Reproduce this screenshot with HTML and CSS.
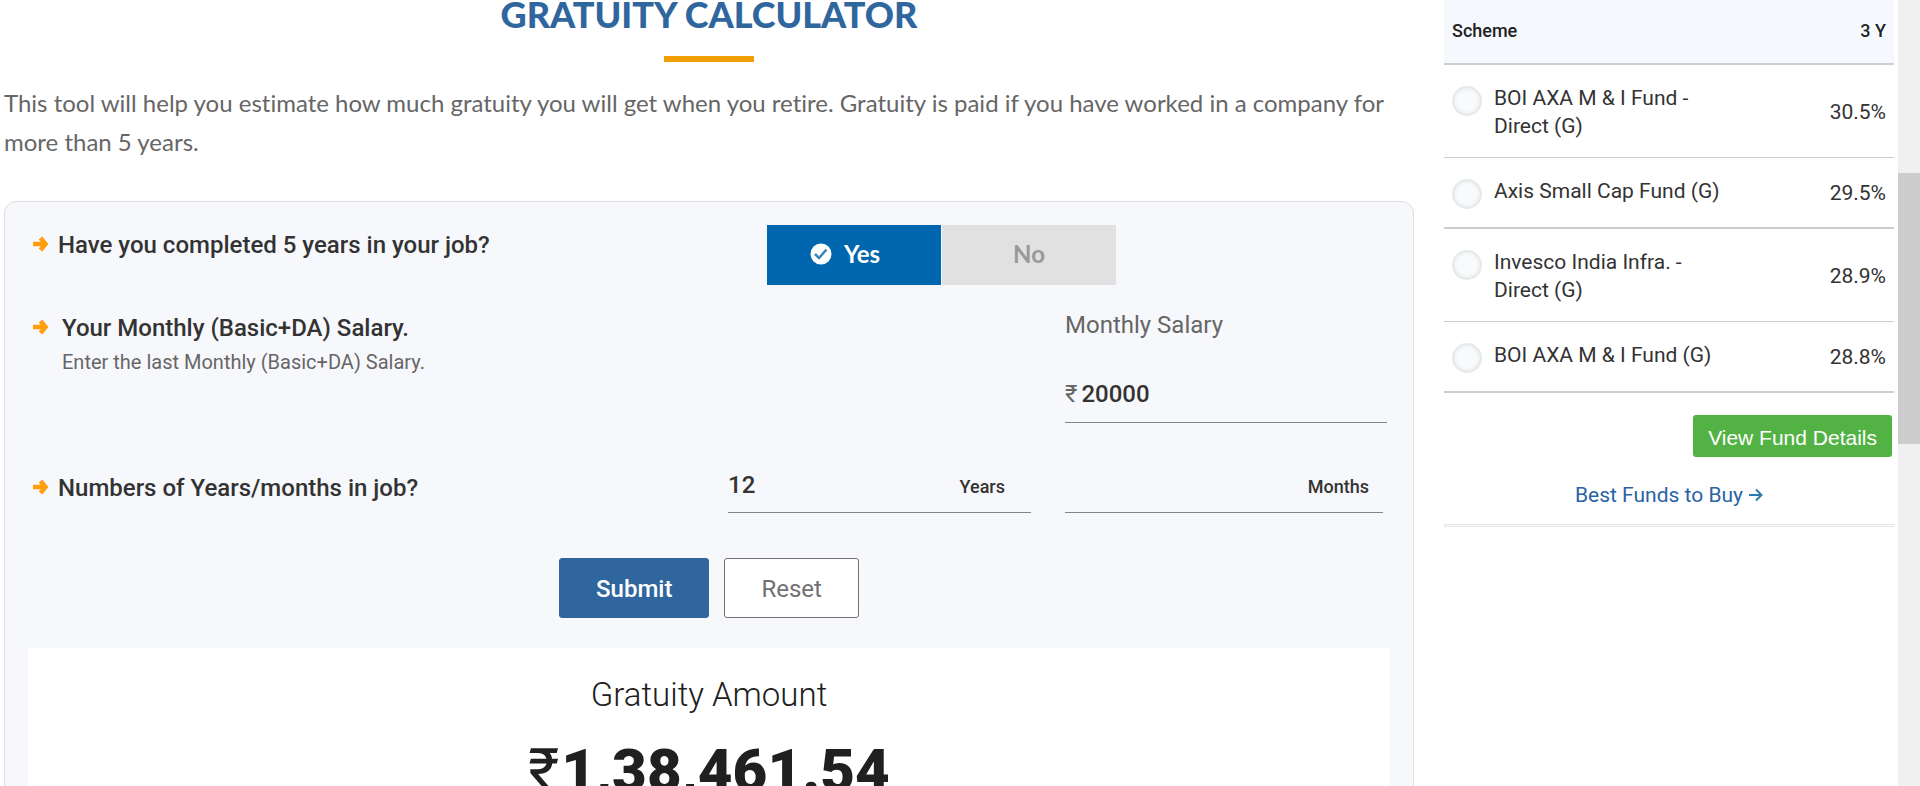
FILE: index.html
```html
<!DOCTYPE html>
<html lang="en">
<head>
<meta charset="utf-8">
<meta name="viewport" content="width=device-width, initial-scale=1">
<title>Gratuity Calculator</title>
<link rel="stylesheet" href="styles.css">
</head>
<body>
<svg class="defs" aria-hidden="true">
  <symbol id="arrow" viewBox="0 0 16 18">
    <path d="M0 9h12M7.500 3l5 6-5 6" fill="none" stroke="currentColor" stroke-width="4.500"/>
  </symbol>
</svg>
<div class="page">
  <main class="main">
    <h1 class="title">GRATUITY CALCULATOR</h1>
    <p class="intro">This tool will help you estimate how much gratuity you will get when you retire. Gratuity is paid if you have worked in a company for more than 5 years.</p>

    <form class="card">
      <div class="row">
        <div class="question first">
          <svg class="bullet"><use href="#arrow"/></svg>
          <span class="question-text">Have you completed 5 years in your job?</span>
        </div>
        <div class="choice">
          <button class="choice-btn selected" type="button" aria-pressed="true">
            <svg class="check" viewBox="0 0 22 22" aria-hidden="true">
              <circle cx="11" cy="11" r="10.5" fill="#fff"/>
              <path d="M5 11l4 4 7.500-8.500" fill="none" stroke="#3b83bd" stroke-width="2.500"/>
            </svg>
            Yes
          </button>
          <button class="choice-btn" type="button" aria-pressed="false">No</button>
        </div>
      </div>

      <div class="row">
        <div class="question spaced">
          <svg class="bullet"><use href="#arrow"/></svg>
          <div>
            <span class="question-text">Your Monthly (Basic+DA) Salary.</span>
            <p class="hint">Enter the last Monthly (Basic+DA) Salary.</p>
          </div>
        </div>
        <div class="salary">
          <label class="field-label" for="salary">Monthly Salary</label>
          <div class="field">
            <span class="currency">₹</span>
            <input class="field-input" id="salary" type="text" value="20000">
          </div>
        </div>
      </div>

      <div class="row tenure">
        <div class="question">
          <svg class="bullet"><use href="#arrow"/></svg>
          <span class="question-text">Numbers of Years/months in job?</span>
        </div>
        <div class="field years">
          <input class="field-input" id="years" type="text" value="12">
          <label class="unit" for="years">Years</label>
        </div>
        <div class="field months">
          <input class="field-input" id="months" type="text">
          <label class="unit" for="months">Months</label>
        </div>
      </div>

      <div class="actions">
        <button class="btn submit" type="submit">Submit</button>
        <button class="btn reset" type="reset">Reset</button>
      </div>

      <section class="result">
        <h2 class="result-title">Gratuity Amount</h2>
        <p class="amount"><span class="amount-symbol">₹</span>1,38,461.54</p>
      </section>
    </form>
  </main>

  <aside class="side">
    <table class="funds">
      <thead>
        <tr><th>Scheme</th><th class="rate">3 Y</th></tr>
      </thead>
      <tbody>
        <tr>
          <td><div class="fund"><input class="radio" type="radio" name="fund" id="f1"><label for="f1">BOI AXA M &amp; I Fund - Direct (G)</label></div></td>
          <td class="rate">30.5%</td>
        </tr>
        <tr>
          <td><div class="fund"><input class="radio" type="radio" name="fund" id="f2"><label for="f2">Axis Small Cap Fund (G)</label></div></td>
          <td class="rate">29.5%</td>
        </tr>
        <tr>
          <td><div class="fund"><input class="radio" type="radio" name="fund" id="f3"><label for="f3">Invesco India Infra. - Direct (G)</label></div></td>
          <td class="rate">28.9%</td>
        </tr>
        <tr>
          <td><div class="fund"><input class="radio" type="radio" name="fund" id="f4"><label for="f4">BOI AXA M &amp; I Fund (G)</label></div></td>
          <td class="rate">28.8%</td>
        </tr>
      </tbody>
    </table>
    <button class="details" type="button">View Fund Details</button>
    <a class="best" href="#">Best Funds to Buy
      <svg class="best-arrow" viewBox="0 0 14 14" aria-hidden="true">
        <path d="M0 7h12M7 1.500l5.500 5.500L7 12.500" fill="none" stroke="currentColor" stroke-width="2"/>
      </svg>
    </a>
    <div class="divider"></div>
  </aside>

  <div class="scrollbar" aria-hidden="true"><div class="thumb"></div></div>
</div>
</body>
</html>
```
FILE: styles.css
```css
* {
  box-sizing: border-box;
}

body {
  margin: 0;
  height: 100vh;
  overflow: hidden;
  background: #fff;
  color: #333;
  font-family: Roboto, "Open Sans", sans-serif;
}

h1,
h2,
p {
  margin: 0;
}

button,
input {
  font: inherit;
  color: inherit;
}

.defs {
  display: none;
}

.page {
  display: grid;
  grid-template-columns: minmax(0, 1fr) 450px 26px;
  grid-template-rows: 100vh;
}

/* Calculator */

.main {
  padding: 0 30px 0 4px;
}

.title {
  display: flex;
  flex-direction: column;
  align-items: center;
  gap: 28px;
  font: 900 36px/28px Lato, sans-serif;
  color: #30669e;
}

.title::after {
  content: "";
  width: 90px;
  height: 6px;
  background: #f29f05;
}

.intro {
  margin: 21px 0 40px;
  font: 24px/39px Lato, sans-serif;
  font-variant-ligatures: none;
  color: #666;
}

.card {
  padding: 23px 23px 0;
  border: 1px solid #ddd;
  border-radius: 12px 12px 0 0;
  background: #f7f8fc;
}

.row {
  display: grid;
  grid-template-columns: minmax(0, 661fr) minmax(0, 303fr) minmax(0, 322fr);
  column-gap: 34px;
  margin-bottom: 26px;
  padding: 0 3px 0 5px;
}

.row.tenure {
  margin: 48px 0 45px;
}

.question {
  display: flex;
  align-items: flex-start;
  gap: 9px;
  padding-top: 3px;
}

.question.first {
  padding-top: 6px;
}

.question.spaced {
  gap: 13px;
}

.bullet {
  flex: none;
  width: 16px;
  height: 18px;
  margin-top: 4px;
  color: #ff9d0a;
}

.question-text {
  font-size: 24px;
  line-height: 28px;
  font-weight: 500;
}

.hint {
  margin-top: 8px;
  font-size: 20px;
  line-height: 24px;
  color: #666;
}

.choice {
  grid-column: 2 / 4;
  display: flex;
  gap: 1px;
  padding-left: 39px;
}

.choice-btn {
  display: flex;
  align-items: center;
  justify-content: center;
  gap: 12px;
  width: 174px;
  height: 60px;
  padding: 0 0 2px;
  border: 0;
  background: #e1e1e1;
  color: #999;
  font: 700 24px/28px Lato, sans-serif;
}

.choice-btn.selected {
  padding-right: 18px;
  background: #0066ae;
  color: #fff;
}

.check {
  width: 22px;
  height: 22px;
}

.salary {
  grid-column: 3;
}

.field-label {
  display: block;
  margin-bottom: 41px;
  font-size: 24px;
  line-height: 28px;
  color: #666;
}

.field {
  display: flex;
  align-items: center;
  gap: 4px;
  padding-bottom: 13px;
  border-bottom: 1px solid #85868c;
}

.salary .field {
  padding-bottom: 14px;
}

.currency {
  font-size: 24px;
  line-height: 28px;
  color: #666;
}

.field-input {
  flex: 1;
  min-width: 0;
  height: 28px;
  padding: 0;
  border: 0;
  outline: 0;
  background: none;
  font-size: 24px;
  font-weight: 500;
}

.months {
  margin-right: 4px;
}

.unit {
  padding: 4px 14px 0 0;
  font-size: 18px;
  line-height: 24px;
  font-weight: 500;
}

.years .unit {
  padding-right: 26px;
}

.actions {
  display: flex;
  justify-content: center;
  gap: 15px;
  margin-bottom: 30px;
}

.btn {
  height: 60px;
  padding: 2px 36px 0;
  border: 1px solid #30669e;
  border-radius: 3px;
  background: #30669e;
  color: #fff;
  font-size: 24px;
}

.submit {
  font-weight: 500;
}

.reset {
  border-color: #717174;
  background: #fff;
  color: #717174;
}

.result {
  padding-top: 27px;
  background: #fff;
  color: #202020;
  text-align: center;
}

.result-title {
  font-size: 33px;
  line-height: 40px;
  font-weight: 300;
}

.amount {
  margin-top: 21px;
  font-size: 60px;
  line-height: 70px;
  font-weight: 900;
}

.amount-symbol {
  padding-right: 2px;
  font-weight: 400;
}

/* Fund list */

.side {
  display: flex;
  flex-direction: column;
}

.funds {
  width: 100%;
  border-spacing: 0;
  font-size: 21px;
  line-height: 28px;
}

.funds th {
  height: 65px;
  padding: 0 8px 2px;
  border-bottom: 2px solid #cdced0;
  background: #f5f9fd;
  color: #222;
  font-size: 18px;
  font-weight: 500;
  text-align: left;
}

.funds td {
  padding: 19px 8px 17px;
  border-bottom: 1px solid #cdcdcd;
}

.funds tr:nth-child(even) td {
  padding-bottom: 18px;
  border-bottom-width: 2px;
}

.funds .rate {
  width: 90px;
  text-align: right;
}

.fund {
  display: flex;
  align-items: flex-start;
  gap: 12px;
}

.fund label {
  max-width: 240px;
}

.radio {
  appearance: none;
  flex: none;
  width: 30px;
  height: 30px;
  margin: 2px 0 0;
  border: 2px solid #e6e9ea;
  border-radius: 50%;
  background: radial-gradient(circle, #f8fafb 50%, #eceff0 75%);
}

.details {
  align-self: flex-end;
  height: 42px;
  margin: 22px 2px 0 0;
  padding: 3px 15px 0;
  border: 0;
  border-radius: 3px;
  background: #52b244;
  color: #fff;
  font-family: "Liberation Sans", sans-serif;
  font-size: 21px;
}

.best {
  display: flex;
  align-items: center;
  justify-content: center;
  gap: 6px;
  margin-top: 24px;
  font-size: 21px;
  line-height: 28px;
  color: #2a62a6;
  text-decoration: none;
}

.best-arrow {
  width: 14px;
  height: 14px;
  color: #2c7bb0;
}

.divider {
  height: 3px;
  margin-top: 15px;
  border: 1px solid #e5e5e5;
}

/* Scroll track */

.scrollbar {
  display: grid;
  grid-template-rows: 173fr 271fr 342fr;
  margin-left: 4px;
  background: #f0f0f0;
}

.thumb {
  grid-row: 2;
  background: #cdcdcd;
}
```
